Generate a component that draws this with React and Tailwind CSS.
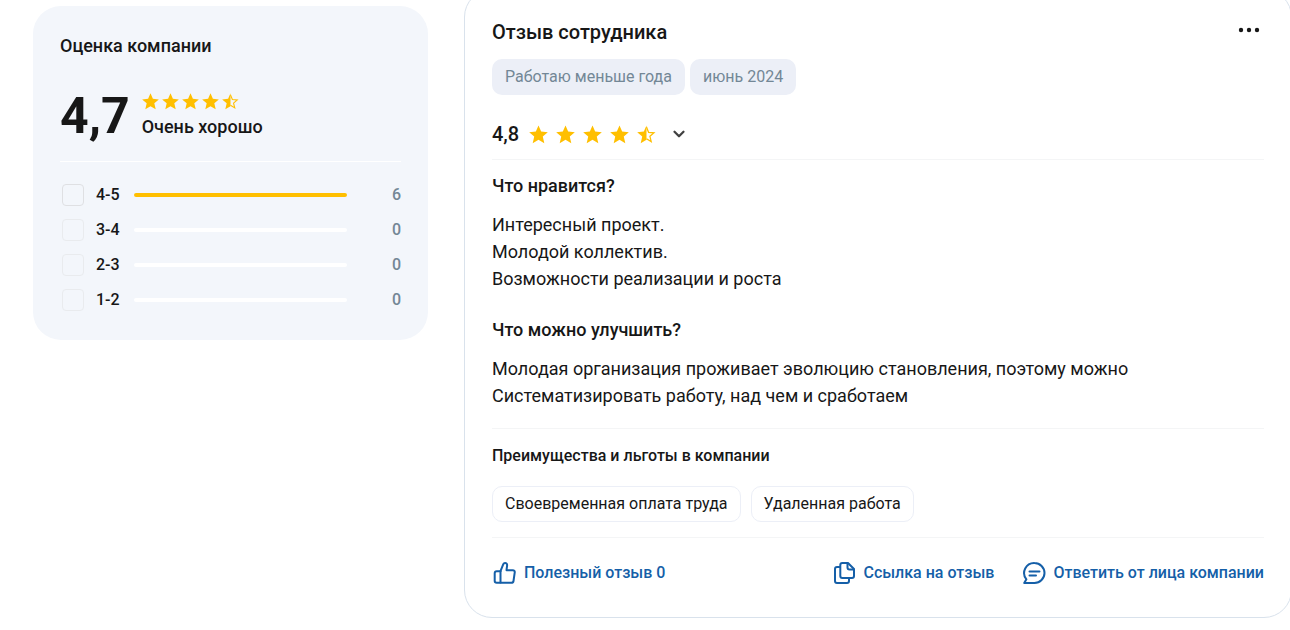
import { ChevronDown } from 'lucide-react'
import React from 'react'

const ranges = [
    { label: '4-5', count: 6 },
    { label: '3-4', count: 0 },
    { label: '2-3', count: 0 },
    { label: '1-2', count: 0 },
]

const benefits = ['Своевременная оплата труда', 'Удаленная работа']

const STAR = 'M10 .4l2.800 6.500 7 .6-5.300 4.700 1.600 6.900L10 15.500l-6.100 3.600 1.600-6.900L.2 7.500l7-.6z'

const Star = ({ half, className }) => (
    <svg viewBox="0 0 20 20" className={className} fill="#ffbf00" aria-hidden="true">
        {half ? (
            <>
                <path d="M10 .4v15.100l-6.100 3.600 1.600-6.900L.2 7.500l7-.6z" />
                <path d="M10 2.200l2.200 5.500 5.700.5-4.300 3.700 1.400 5.600-5-3" fill="none" stroke="#ffbf00" strokeWidth="1.300" />
            </>
        ) : (
            <path d={STAR} />
        )}
    </svg>
)

const Stars = ({ className, starClass }) => (
    <div className={`flex items-center ${className}`}>
        {[1, 2, 3, 4, 5].map((n) => (
            <Star key={n} half={n === 5} className={starClass} />
        ))}
    </div>
)

const ThumbIcon = () => (
    <svg viewBox="0 0 24 24" className="size-6" fill="none" stroke="currentColor" strokeWidth="2" strokeLinejoin="round" strokeLinecap="round" aria-hidden="true">
        <path d="M8.500 10.200L11.300 3.200C11.700 2.300 12.300 2 13 2c1.400 0 2.300 1.100 2.100 2.500L14.500 9.200h6.200c1.500 0 2.300 1 2 2.500l-1.200 8.300c-.2 1.200-1 1.800-2.200 1.800H4.700C3.500 21.800 2.700 21.200 2.700 20v-7.800c0-1.200.8-2 2-2z" />
        <path d="M8.500 10.200V21.500" />
    </svg>
)

const CopyIcon = () => (
    <svg viewBox="0 0 24 24" className="size-6" fill="none" stroke="currentColor" strokeWidth="2" strokeLinejoin="round" strokeLinecap="round" aria-hidden="true">
        <path d="M10.300 2H16l6 6v7c0 1.200-.8 2-2 2h-9.700c-1.200 0-2-.8-2-2V4c0-1.200.8-2 2-2z" />
        <path d="M15.500 2.500V6.500c0 1.200.8 2 2 2H21.500" />
        <path d="M8 6H5c-1.200 0-2 .8-2 2v12c0 1.200.8 2 2 2h10c1.200 0 2-.8 2-2v-2.500" />
    </svg>
)

const ReplyIcon = () => (
    <svg viewBox="0 0 24 24" className="size-6" fill="none" stroke="currentColor" strokeWidth="2" strokeLinejoin="round" strokeLinecap="round" aria-hidden="true">
        <path d="M12.500 2a10 10 0 1 1 0 20H2.200l2.200-3.700A10 10 0 0 1 12.500 2z" />
        <path d="M7.500 10.500h10M7.500 14.500h6.500" />
    </svg>
)

const RatingCard = () => {

    const total = ranges.reduce((sum, r) => sum + r.count, 0)

    return (
        <aside className="w-[395px] shrink-0 rounded-[28px] bg-[#f3f6fb] px-[27px] pt-7 pb-[23px] mt-[6px]">

            <h2 className="text-[18px] leading-6 font-medium">Оценка компании</h2>

            <div className="flex items-center gap-3 mt-6 h-[67px]">
                <span className="text-[50px] leading-[60px] font-bold">4,7</span>
                <div>
                    <Stars className="gap-[3px]" starClass="size-[17px]" />
                    <p className="text-[18px] leading-6 font-medium mt-[5px]">Очень хорошо</p>
                </div>
            </div>

            <ul className="border-t border-white mt-3 pt-[15px]">
                {ranges.map((r) => (
                    <li key={r.label} className="flex items-center h-[35px]">
                        <label className={`flex items-center gap-3 w-[74px] pl-[2px] text-[16px] font-medium ${r.count ? 'cursor-pointer' : ''}`}>
                            <input
                                type="checkbox"
                                disabled={!r.count}
                                className="appearance-none size-[22px] shrink-0 rounded border border-[#dfe0e3] disabled:border-[#e9ebee]"
                            />
                            {r.label}
                        </label>
                        <div className="w-[213px] h-1 rounded-full bg-white">
                            <div className="h-1 rounded-full bg-[#ffbf00]" style={{ width: `${(r.count / total) * 100}%` }} />
                        </div>
                        <span className="ml-auto text-[16px] font-medium text-[#738796]">{r.count}</span>
                    </li>
                ))}
            </ul>

        </aside>
    )
}

const Review = () => (
    <article className="flex-1 min-w-0 -mt-[11px] -mr-[2px] rounded-[28px] border border-[#d9e2ec] px-[27px] pt-7 pb-8">

        <header className="flex items-start justify-between">
            <h2 className="text-[20px] leading-7 font-medium">Отзыв сотрудника</h2>
            <button type="button" aria-label="Меню" className="h-6 px-1">
                <svg viewBox="0 0 22 6" className="w-[22px] h-[6px]" fill="currentColor" aria-hidden="true">
                    <circle cx="3" cy="3" r="2.200" />
                    <circle cx="11" cy="3" r="2.200" />
                    <circle cx="19" cy="3" r="2.200" />
                </svg>
            </button>
        </header>

        <div className="flex gap-[5px] mt-[13px] text-[16px] text-[#738796]">
            <span className="flex items-center h-9 px-[13px] rounded-[10px] bg-[#eceff7]">Работаю меньше года</span>
            <span className="flex items-center h-9 px-[13px] rounded-[10px] bg-[#eceff7]">июнь 2024</span>
        </div>

        <div className="flex items-center mt-[25px] pb-[11px] border-b border-[#f4f5f6]">
            <span className="text-[20px] leading-7 font-medium">4,8</span>
            <Stars className="gap-2 ml-[10px]" starClass="size-[19px]" />
            <button type="button" aria-label="Подробнее" className="ml-[14px]">
                <ChevronDown size={18} strokeWidth={3} color="#404040" />
            </button>
        </div>

        <section className="mt-[14px]">
            <h3 className="text-[18px] leading-6 font-medium">Что нравится?</h3>
            <p className="text-[18px] leading-[27px] mt-[13px]">
                Интересный проект.<br />
                Молодой коллектив.<br />
                Возможности реализации и роста
            </p>
        </section>

        <section className="mt-[26px] pb-[19px] border-b border-[#f4f5f6]">
            <h3 className="text-[18px] leading-6 font-medium">Что можно улучшить?</h3>
            <p className="text-[18px] leading-[27px] mt-[13px]">
                Молодая организация проживает эволюцию становления, поэтому можно<br />
                Систематизировать работу, над чем и сработаем
            </p>
        </section>

        <section className="mt-[15px] pb-[15px] border-b border-[#f4f5f6]">
            <h3 className="text-[16px] leading-6 font-medium">Преимущества и льготы в компании</h3>
            <ul className="flex gap-[10px] mt-[18px] text-[16px]">
                {benefits.map((b) => (
                    <li key={b} className="flex items-center h-9 px-3 rounded-[10px] border border-[#eceff7]">{b}</li>
                ))}
            </ul>
        </section>

        <footer className="flex items-center gap-7 mt-[23px] text-[16px] leading-6 font-medium text-[#155fa8]">
            <button type="button" className="flex items-center gap-2 mr-auto">
                <ThumbIcon />
                Полезный отзыв 0
            </button>
            <a href="#review" className="flex items-center gap-[7px]">
                <CopyIcon />
                Ссылка на отзыв
            </a>
            <button type="button" className="flex items-center gap-[7px]">
                <ReplyIcon />
                Ответить от лица компании
            </button>
        </footer>

    </article>
)

const App = () => {
    return (
        <main className="flex items-start gap-9 pl-[33px] min-h-screen overflow-hidden bg-white text-[#171717] font-[Roboto,sans-serif]">
            <RatingCard />
            <Review />
        </main>
    )
}

export default App
